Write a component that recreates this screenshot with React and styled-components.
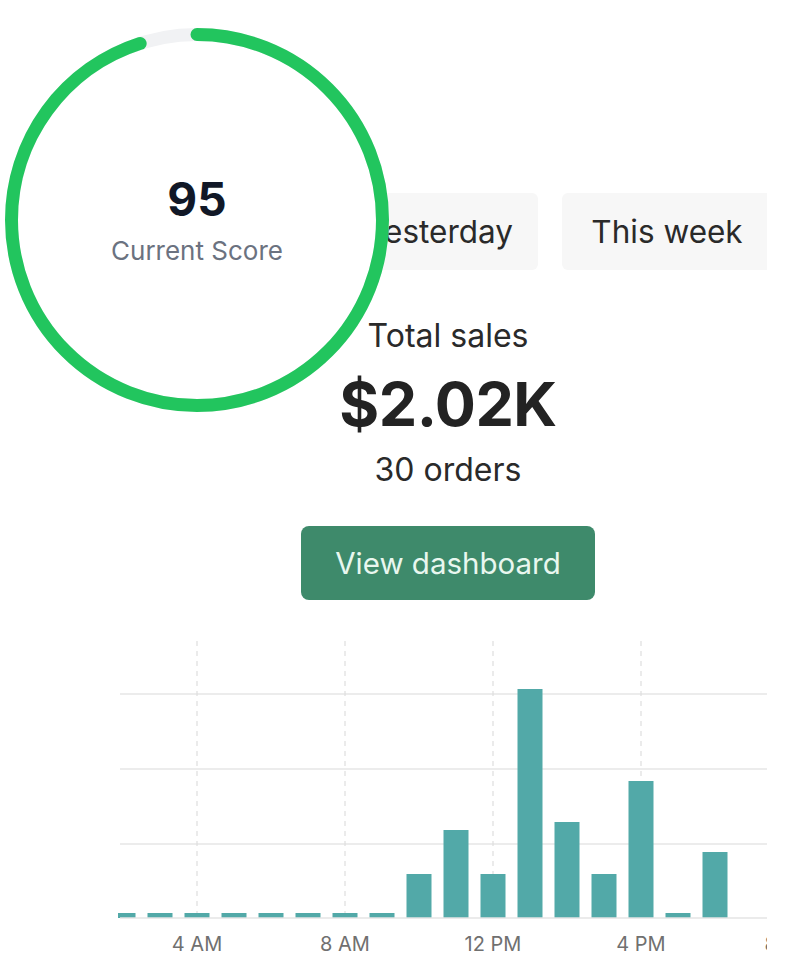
import styled, { createGlobalStyle } from 'styled-components';

const GlobalStyle = createGlobalStyle`
    body {
        margin: 0;
        background: #ffffff;
        font-family: Inter, "Noto Sans", sans-serif;
        color: #222222;
    }
`

//hourly sales bars, height in px above the baseline
const bars = [
    { hour: 2, h: 5 }, { hour: 3, h: 5 }, { hour: 4, h: 5 }, { hour: 5, h: 5 },
    { hour: 6, h: 5 }, { hour: 7, h: 5 }, { hour: 8, h: 5 }, { hour: 9, h: 5 },
    { hour: 10, h: 44 }, { hour: 11, h: 88 }, { hour: 12, h: 44 }, { hour: 13, h: 229 },
    { hour: 14, h: 96 }, { hour: 15, h: 44 }, { hour: 16, h: 137 }, { hour: 17, h: 5 },
    { hour: 18, h: 66 },
]

const ticks = [
    { hour: 4, label: '4 AM' },
    { hour: 8, label: '8 AM' },
    { hour: 12, label: '12 PM' },
    { hour: 16, label: '4 PM' },
    { hour: 20, label: '8 PM' },
]

const tabs = [
    { label: 'Today', width: 198 },
    { label: 'Yesterday', width: 198 },
    { label: 'This week', width: 210 },
]

const BASE = 287
const hourX = (hour) => 79 + (hour - 4) * 37

const ScoreRing = ({ score }) => {
    const r = 185.5
    const c = 2 * Math.PI * r
    return (
        <RingWrapper>
            <svg width="384" height="384" viewBox="0 0 384 384">
                <circle cx="192" cy="192" r={r} fill="#ffffff" stroke="#f1f2f4" strokeWidth="13" />
                <circle
                    cx="192" cy="192" r={r}
                    fill="none"
                    stroke="#22c55e"
                    strokeWidth="13"
                    strokeLinecap="round"
                    strokeDasharray={`${(c * score) / 100} ${c}`}
                    transform="rotate(-90 192 192)"
                />
            </svg>
            <RingLabel>
                <Score>{score}</Score>
                <ScoreCaption>Current Score</ScoreCaption>
            </RingLabel>
        </RingWrapper>
    )
}

const SalesChart = () => (
    <ChartSvg width="660" height="333" viewBox="0 0 660 333">
        {[63, 138, 213].map((y) => (
            <line key={y} x1="2" x2="660" y1={y} y2={y} stroke="#e6e6e6" strokeWidth="1.5" />
        ))}
        {ticks.slice(0, 4).map((t) => (
            <line key={t.hour} x1={hourX(t.hour)} x2={hourX(t.hour)} y1="10" y2={BASE}
                stroke="#dedede" strokeWidth="1.2" strokeDasharray="5 5" />
        ))}
        {bars.map((b) => (
            <rect key={b.hour} x={hourX(b.hour) - 12.5} y={BASE - b.h} width="25" height={b.h} fill="#52a9a8" />
        ))}
        <line x1="2" x2="660" y1={BASE} y2={BASE} stroke="#e4e4e4" strokeWidth="1.5" />
        {ticks.map((t) => (
            <text key={t.hour} x={hourX(t.hour)} y="320" textAnchor="middle"
                fontSize="20" fill="#707070" fontFamily="Inter, sans-serif">{t.label}</text>
        ))}
    </ChartSvg>
)

const App = () => {
    return (
        <Stage>
            <GlobalStyle />
            <Panel>
                <Column>
                    <Tabs>
                        {tabs.map((t) => (
                            <Tab key={t.label} $width={t.width}>{t.label}</Tab>
                        ))}
                    </Tabs>
                    <SalesLabel>Total sales</SalesLabel>
                    <SalesValue>$2.02K</SalesValue>
                    <Orders>30 orders</Orders>
                    <DashButton>View dashboard</DashButton>
                    <SalesChart />
                </Column>
            </Panel>
            <ScoreRing score={95} />
        </Stage>
    )
}

export default App


//Styled components
const Stage = styled.div`
    position: relative;
    width: 787px;
    height: 968px;
    overflow: hidden;
    background: #ffffff;
`

const Panel = styled.div`
    margin-left: 118px;
    width: 649px;
    overflow: hidden;
    padding-top: 193px;
`

const Column = styled.div`
    width: 660px;
    display: flex;
    flex-direction: column;
    align-items: center;
`

const Tabs = styled.div`
    display: flex;
    gap: 24px;
    align-self: flex-start;
`

const Tab = styled.div`
    width: ${(p) => p.$width}px;
    height: 77px;
    flex-shrink: 0;
    display: flex;
    align-items: center;
    justify-content: center;
    background: #f7f7f7;
    border-radius: 6px;
    font-size: 31.5px;
    color: #2a2a2a;
`

const SalesLabel = styled.div`
    margin-top: 47px;
    font-size: 32px;
    line-height: 38px;
    color: #2a2a2a;
`

const SalesValue = styled.div`
    margin-top: 14px;
    font-size: 61px;
    font-weight: 700;
    line-height: 70px;
    color: #232323;
    letter-spacing: -0.5px;
`

const Orders = styled.div`
    margin-top: 12px;
    font-size: 32px;
    line-height: 38px;
    color: #2a2a2a;
`

const DashButton = styled.button`
    margin-top: 37px;
    width: 294px;
    height: 74px;
    border: none;
    border-radius: 8px;
    background: #3e8a6b;
    color: #e9f7ef;
    font-family: Inter, sans-serif;
    font-size: 29.5px;
    cursor: pointer;
`

const ChartSvg = styled.svg`
    display: block;
    margin-top: 31px;
    align-self: flex-start;
`

const RingWrapper = styled.div`
    position: absolute;
    left: 5px;
    top: 28px;
    width: 384px;
    height: 384px;

    svg {
        display: block;
    }
`

const RingLabel = styled.div`
    position: absolute;
    inset: 0;
    display: flex;
    flex-direction: column;
    align-items: center;
    justify-content: center;
`

const Score = styled.div`
    font-size: 46px;
    font-weight: 700;
    line-height: 50px;
    color: #111827;
`

const ScoreCaption = styled.div`
    margin-top: 12px;
    font-size: 26px;
    line-height: 30px;
    color: #6b7280;
`
